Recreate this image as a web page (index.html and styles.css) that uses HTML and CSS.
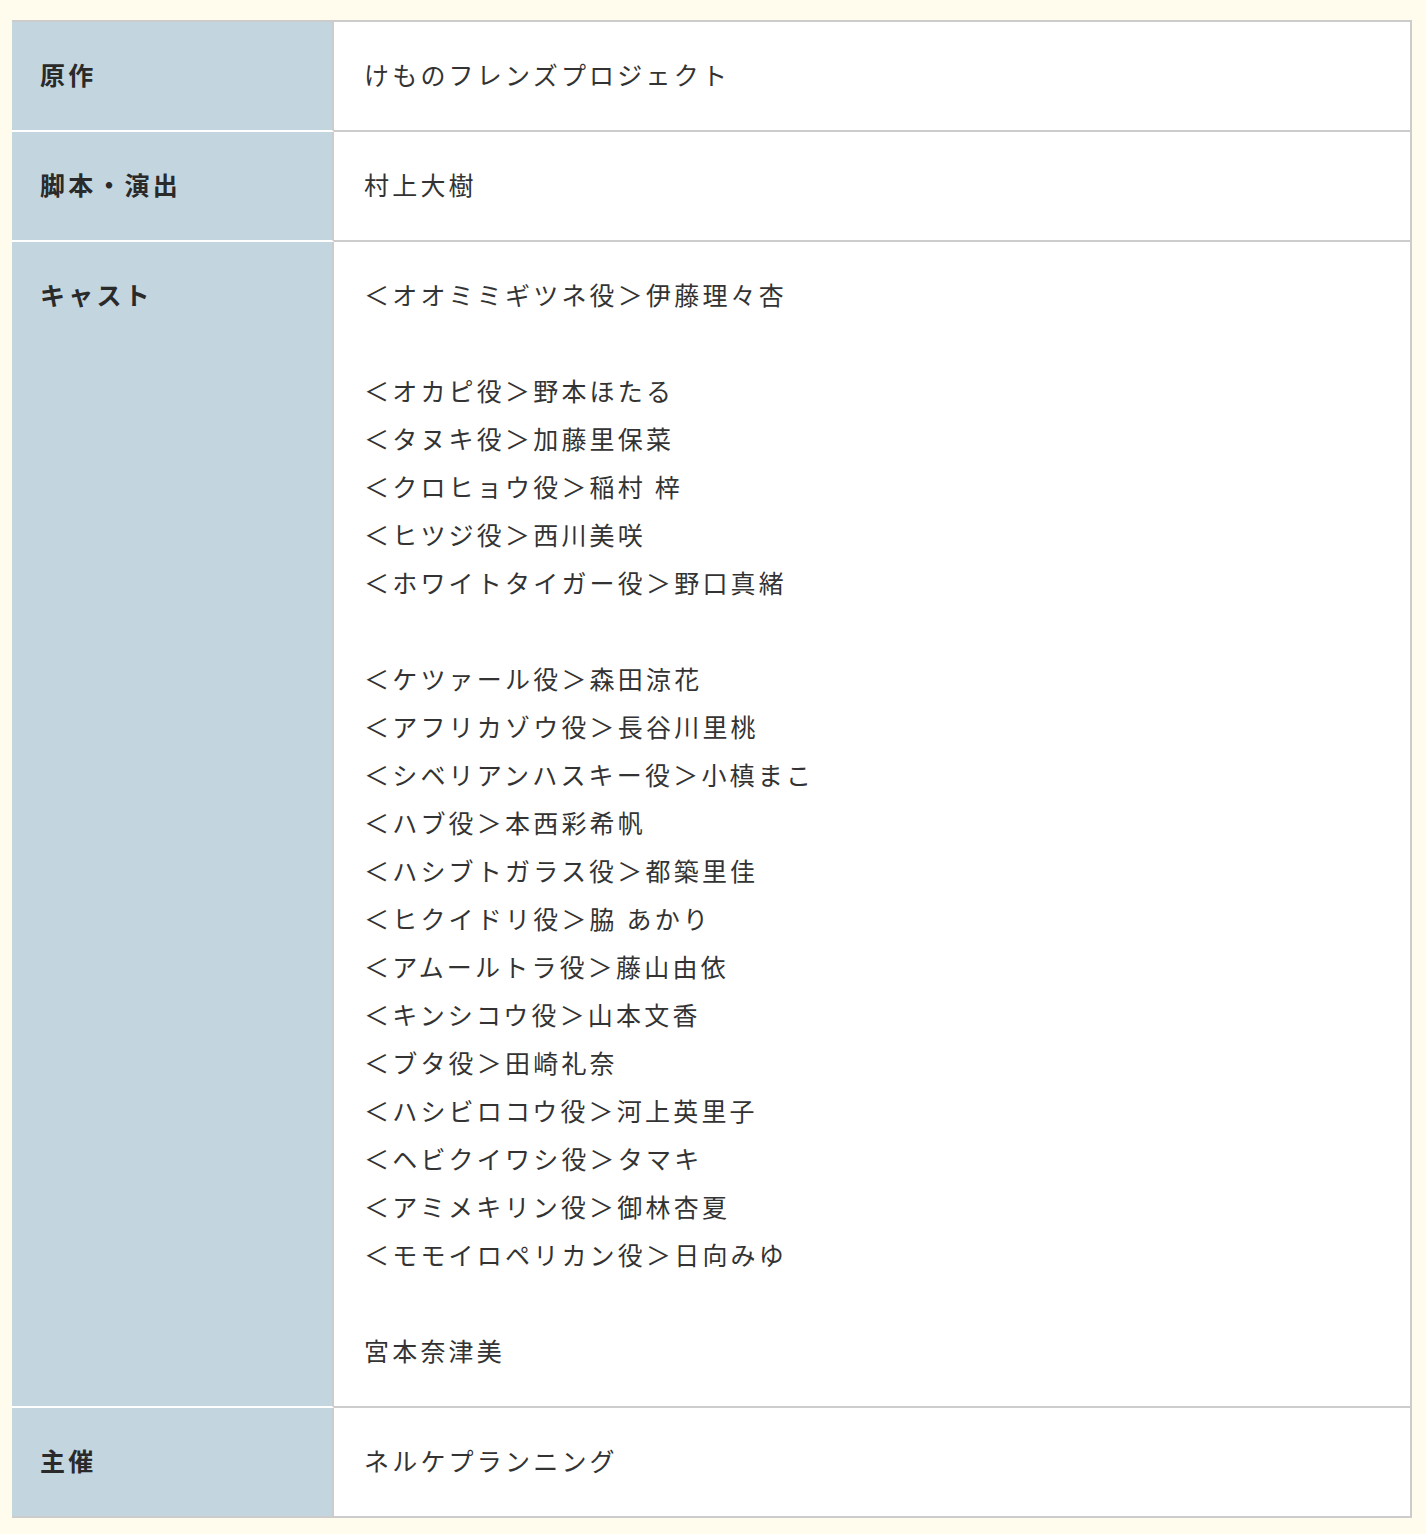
FILE: index.html
```html
<!DOCTYPE html>
<html lang="ja">
<head>
<meta charset="utf-8">
<title>公演情報</title>
<link rel="stylesheet" href="styles.css">
</head>
<body>
<table class="info">
  <tbody>
    <tr>
      <th class="info-head">原作</th>
      <td class="info-body">けものフレンズプロジェクト</td>
    </tr>
    <tr>
      <th class="info-head">脚本・演出</th>
      <td class="info-body">村上大樹</td>
    </tr>
    <tr>
      <th class="info-head">キャスト</th>
      <td class="info-body">＜オオミミギツネ役＞伊藤理々杏<br><br>＜オカピ役＞野本ほたる<br>＜タヌキ役＞加藤里保菜<br>＜クロヒョウ役＞稲村 梓<br>＜ヒツジ役＞西川美咲<br>＜ホワイトタイガー役＞野口真緒<br><br>＜ケツァール役＞森田涼花<br>＜アフリカゾウ役＞長谷川里桃<br>＜シベリアンハスキー役＞小槙まこ<br>＜ハブ役＞本西彩希帆<br>＜ハシブトガラス役＞都築里佳<br>＜ヒクイドリ役＞脇 あかり<br>＜アムールトラ役＞藤山由依<br>＜キンシコウ役＞山本文香<br>＜ブタ役＞田崎礼奈<br>＜ハシビロコウ役＞河上英里子<br>＜ヘビクイワシ役＞タマキ<br>＜アミメキリン役＞御林杏夏<br>＜モモイロペリカン役＞日向みゆ<br><br>宮本奈津美</td>
    </tr>
    <tr>
      <th class="info-head">主催</th>
      <td class="info-body">ネルケプランニング</td>
    </tr>
  </tbody>
</table>
</body>
</html>
```
FILE: styles.css
```css
html, body {
  margin: 0;
  padding: 0;
  background: #fffcee;
}
body {
  padding: 20px 14px 16px 12px;
  font-family: "Noto Sans CJK JP", "Noto Sans", sans-serif;
  color: #333;
}
.info {
  width: 1400px;
  border-collapse: separate;
  border-spacing: 0;
  border-top: 2px solid #cccccc;
  border-right: 2px solid #cccccc;
  font-size: 25px;
  line-height: 48px;
  letter-spacing: 3.2px;
}
.info-head {
  width: 264px;
  padding: 28px 28px 32px;
  background: #c3d6e0;
  border-right: 2px solid #cccccc;
  border-bottom: 2px solid #ffffff;
  text-align: left;
  vertical-align: top;
  font-weight: bold;
  color: #2a2a2a;
}
tr:last-child .info-head {
  border-bottom-color: #cccccc;
}
.info-body {
  padding: 28px 30px 32px;
  background: #ffffff;
  border-bottom: 2px solid #cccccc;
  vertical-align: top;
  font-weight: normal;
}
```
